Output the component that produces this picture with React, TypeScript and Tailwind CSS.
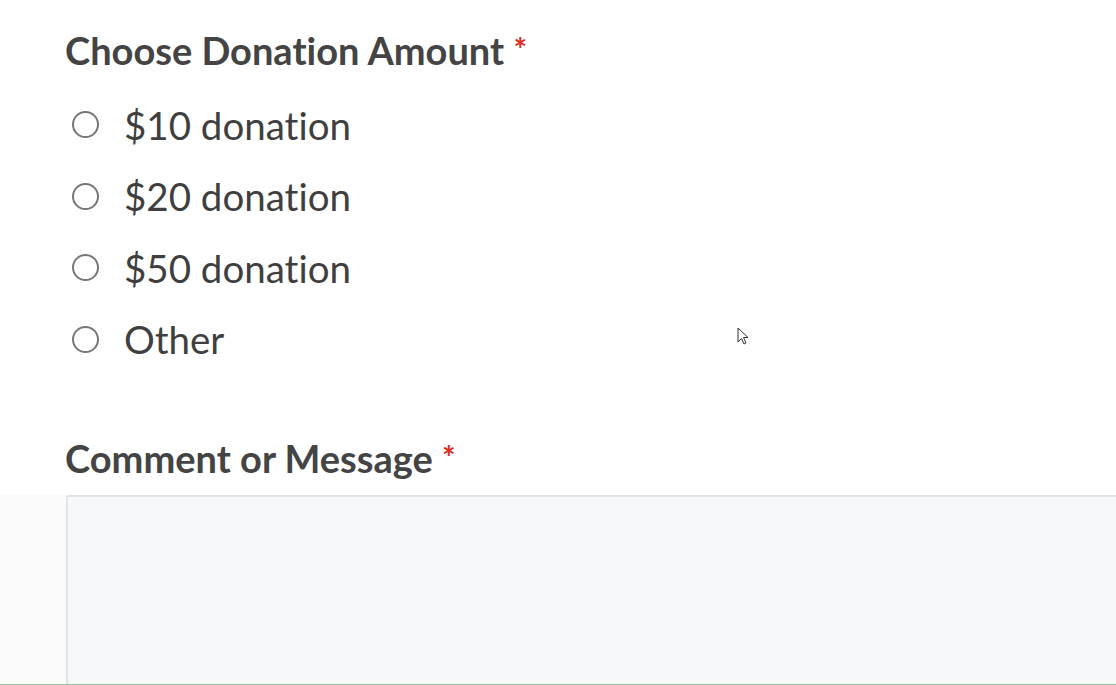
import React from "react";

const options = ["$10 donation", "$20 donation", "$50 donation", "Other"];

export default function App() {
  return (
    <div
      className="relative w-[1116px] h-[685px] overflow-hidden bg-white text-[#444] [font-variant-ligatures:none]"
      style={{ fontFamily: "Lato, 'Open Sans', sans-serif" }}
    >
      <div className="pl-[65px] pt-[27px]">
        <h2 className="text-[38px] leading-[46px] font-bold text-[#444]">
          Choose Donation Amount <span className="text-[#e02b20] text-[32px] align-top relative top-[0px]">*</span>
        </h2>
        <div className="mt-[16px] flex flex-col">
          {options.map((o) => (
            <label key={o} className="flex items-center h-[71.5px]">
              <span className="ml-[7px] w-[27px] h-[27px] rounded-full border-[2px] border-[#777] bg-white" />
              <span className="ml-[25px] text-[38.5px] leading-[46px] font-normal text-[#3f3f3f]">{o}</span>
            </label>
          ))}
        </div>
        <h2 className="mt-[60px] text-[38px] leading-[46px] font-bold text-[#444]">
          Comment or Message <span className="text-[#e02b20] text-[32px] align-top relative top-[0px]">*</span>
        </h2>
      </div>
      <div className="mt-[14px] pl-[66px] flex flex-col h-[200px] bg-[#fbfbfc]">
        <div className="flex-1 border-t-2 border-l-2 border-[#e2e3e6] rounded-tl-[3px] bg-[#f7f8fa]" />
      </div>
      <div className="absolute left-0 right-0 bottom-0 h-[1px] bg-[#8fc49a]" />
      <svg className="absolute left-[737px] top-[327px]" width="14" height="20" viewBox="0 0 14 20">
        <path d="M1 1 L1 15 L4.5 11.5 L7 17 L9 16 L6.5 10.5 L11 10.5 Z" fill="white" stroke="#333" strokeWidth="1" />
      </svg>
    </div>
  );
}
